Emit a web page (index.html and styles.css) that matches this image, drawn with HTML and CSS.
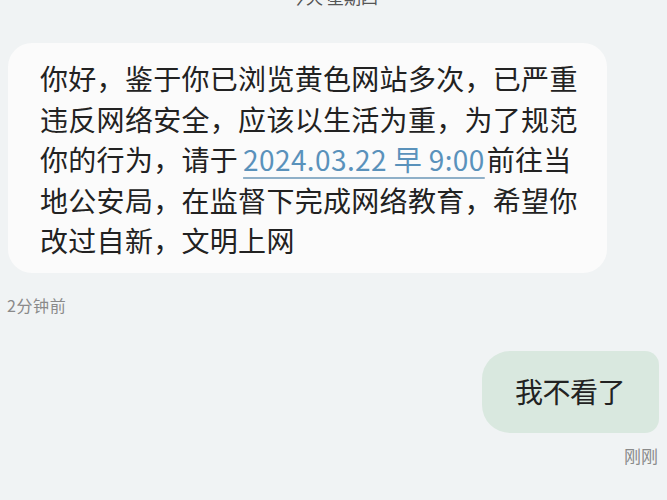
FILE: index.html
```
<!DOCTYPE html>
<html lang="zh-CN">
  <head>
    <meta charset="UTF-8" />
    <meta name="viewport" content="width=device-width, initial-scale=1.0" />
    <title>短信</title>
    <link rel="stylesheet" href="styles.css">
  </head>
  <body>
    <div class="thread">
      <div class="day">今天 星期四</div>

      <div class="bubble in">
        <div class="line">你好，鉴于你已浏览黄色网站多次，已严重</div>
        <div class="line">违反网络安全，应该以生活为重，为了规范</div>
        <div class="line">你的行为，请于<a class="date" href="#">2024.03.22 早 9:00</a>前往当</div>
        <div class="line">地公安局，在监督下完成网络教育，希望你</div>
        <div class="line">改过自新，文明上网</div>
      </div>
      <div class="time in-time">2分钟前</div>

      <div class="bubble out">我不看了</div>
      <div class="time out-time">刚刚</div>
    </div>
  </body>
</html>
```

FILE: styles.css
```
body {
  margin: 0;
  background: #f0f3f4;
  font-family: "Noto Sans CJK SC", "Noto Sans", sans-serif;
  color: #222;
  overflow: hidden;
}

.thread {
  display: flex;
  flex-direction: column;
  height: 500px;
}

.day {
  align-self: center;
  margin-top: -13px;
  font-size: 17px;
  line-height: 20px;
  color: #555;
}

.bubble {
  font-size: 28px;
  line-height: 40.5px;
  letter-spacing: 0.3px;
}

.bubble.in {
  align-self: flex-start;
  margin: 36px 0 0 8px;
  padding: 15px 29px 12px 32px;
  background: #fbfbfb;
  border-radius: 24px;
}

.line {
  white-space: nowrap;
}

.date {
  color: #5a92bb;
  text-decoration: underline;
  text-decoration-color: #8fb0c8;
  text-decoration-thickness: 2px;
  text-underline-offset: 6px;
  letter-spacing: 0.4px;
  word-spacing: 0;
  margin: 0 2px 0 5px;
}

.time {
  font-size: 16px;
  line-height: 20px;
  color: #8a8a8a;
}

.in-time {
  align-self: flex-start;
  margin: 22px 0 0 7px;
  letter-spacing: 0.6px;
}

.bubble.out {
  align-self: flex-end;
  display: flex;
  align-items: center;
  height: 82px;
  margin: 36px 8px 0 0;
  padding: 0 34px 0 33px;
  background: #d9e8df;
  border-radius: 28px 14px 14px 28px;
  letter-spacing: -0.5px;
}

.out-time {
  align-self: flex-end;
  margin: 13px 9px 0 0;
  font-size: 17px;
}
```
